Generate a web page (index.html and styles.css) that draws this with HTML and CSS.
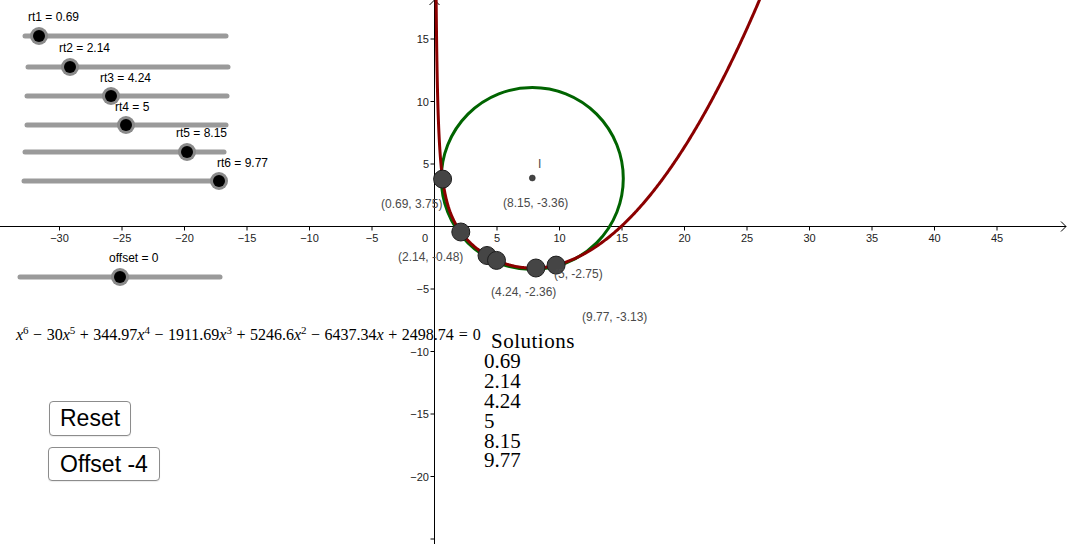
FILE: index.html
```html
<!DOCTYPE html>
<html>
<head>
<meta charset="utf-8">
<title>Solutions</title>
<link rel="stylesheet" href="styles.css">
</head>
<body>
<div class="applet">
  <svg class="graph" width="1069" height="544" viewBox="0 0 1069 544" xmlns="http://www.w3.org/2000/svg">
    <g class="axes">
      <line x1="0" y1="226.5" x2="1066" y2="226.5"/>
      <polyline class="arrow" points="1061,221.5 1066,226.5 1061,231.5"/>
      <line x1="434.5" y1="0" x2="434.5" y2="544"/>
      <polyline class="arrow" points="429.5,5 434.5,0 439.5,5"/>
    </g>
    <g id="ticks" class="ticks"></g>
    <g id="ticklabels" class="ticklabels"></g>

    <circle class="circ" cx="532.3" cy="178.5" r="91"/>
    <path id="redcurve" class="curve" d=""/>

    <circle class="center" cx="532.3" cy="178" r="3"/>
    <text class="plabel" x="538" y="164">I</text>

    <g class="pts">
      <circle cx="442.6" cy="179.1" r="9"/>
      <circle cx="460.8" cy="232" r="9"/>
      <circle cx="487" cy="255.5" r="9"/>
      <circle cx="496.5" cy="260.4" r="9"/>
      <circle cx="535.9" cy="268" r="9"/>
      <circle cx="556.1" cy="265.1" r="9"/>
    </g>
    <g class="plabels">
      <text class="plabel" x="381" y="204">(0.69, 3.75)</text>
      <text class="plabel" x="503" y="203">(8.15, -3.36)</text>
      <text class="plabel" x="398" y="257">(2.14, -0.48)</text>
      <text class="plabel" x="554" y="274">(5, -2.75)</text>
      <text class="plabel" x="491" y="292">(4.24, -2.36)</text>
      <text class="plabel" x="582" y="317">(9.77, -3.13)</text>
    </g>

    <g class="sliders">
      <line class="track" x1="25" y1="36" x2="226" y2="36"/>
      <circle class="knob-ring" cx="39" cy="36" r="9"/><circle class="knob" cx="39" cy="36" r="6"/>
      <text class="slabel" x="28" y="17">rt1 = 0.69</text>

      <line class="track" x1="28" y1="67" x2="228" y2="67"/>
      <circle class="knob-ring" cx="70" cy="67" r="9"/><circle class="knob" cx="70" cy="67" r="6"/>
      <text class="slabel" x="59" y="48">rt2 = 2.14</text>

      <line class="track" x1="27" y1="96" x2="227" y2="96"/>
      <circle class="knob-ring" cx="111" cy="96" r="9"/><circle class="knob" cx="111" cy="96" r="6"/>
      <text class="slabel" x="100" y="78">rt3 = 4.24</text>

      <line class="track" x1="27" y1="125" x2="226" y2="125"/>
      <circle class="knob-ring" cx="126" cy="125" r="9"/><circle class="knob" cx="126" cy="125" r="6"/>
      <text class="slabel" x="115" y="107">rt4 = 5</text>

      <line class="track" x1="25" y1="152" x2="224" y2="152"/>
      <circle class="knob-ring" cx="187" cy="152" r="9"/><circle class="knob" cx="187" cy="152" r="6"/>
      <text class="slabel" x="176" y="132.5">rt5 = 8.15</text>

      <line class="track" x1="24" y1="181" x2="224" y2="181"/>
      <circle class="knob-ring" cx="219" cy="181" r="9"/><circle class="knob" cx="219" cy="181" r="6"/>
      <text class="slabel" x="217" y="162.5">rt6 = 9.77</text>

      <line class="track" x1="20" y1="277" x2="220" y2="277"/>
      <circle class="knob-ring" cx="120" cy="277" r="9"/><circle class="knob" cx="120" cy="277" r="6"/>
      <text class="slabel" x="109" y="258">offset = 0</text>
    </g>
  </svg>

  <div class="equation"><i>x</i><sup>6</sup><span class="op">−</span>30<i>x</i><sup>5</sup><span class="op">+</span>344.97<i>x</i><sup>4</sup><span class="op">−</span>1911.69<i>x</i><sup>3</sup><span class="op">+</span>5246.6<i>x</i><sup>2</sup><span class="op">−</span>6437.34<i>x</i><span class="op">+</span>2498.74<span class="rel">=</span>0</div>

  <div class="solutions">
    <div class="sol-title">Solutions</div>
    <div>0.69</div>
    <div>2.14</div>
    <div>4.24</div>
    <div>5</div>
    <div>8.15</div>
    <div>9.77</div>
  </div>

  <div class="buttons">
    <button class="btn btn-reset">Reset</button>
    <button class="btn btn-offset">Offset -4</button>
  </div>
</div>
<script src="script.js"></script>
</body>
</html>
```

FILE: styles.css
```css
html, body {
  margin: 0;
  padding: 0;
  background: #ffffff;
  overflow: hidden;
}
.applet {
  position: relative;
  width: 1069px;
  height: 544px;
  background: #ffffff;
  font-family: "Liberation Sans", Arial, sans-serif;
}
.graph {
  display: block;
}
.axes line, .axes polyline, .ticks line {
  stroke: #000000;
  stroke-width: 1;
  fill: none;
}
.ticklabels text {
  font-family: "Liberation Sans", Arial, sans-serif;
  font-size: 11px;
  fill: #222222;
  dominant-baseline: central;
}
.circ {
  fill: none;
  stroke: #006400;
  stroke-width: 3;
}
.curve {
  fill: none;
  stroke: #8b0000;
  stroke-width: 3;
  stroke-linejoin: round;
}
.center {
  fill: #444444;
  stroke: #222222;
  stroke-width: 0.5;
}
.pts circle {
  fill: #454545;
  stroke: #1e1e1e;
  stroke-width: 1;
}
.plabel {
  font-family: "Liberation Sans", Arial, sans-serif;
  font-size: 12px;
  fill: #4a4a4a;
  dominant-baseline: central;
}
.track {
  stroke: #9a9a9a;
  stroke-width: 5;
  stroke-linecap: round;
}
.knob-ring {
  fill: #8a8a8a;
}
.knob {
  fill: #000000;
}
.slabel {
  font-family: "Liberation Sans", Arial, sans-serif;
  font-size: 12px;
  fill: #000000;
  dominant-baseline: central;
}
.equation {
  position: absolute;
  left: 16px;
  top: 325px;
  font-family: "Liberation Serif", "Times New Roman", serif;
  font-size: 16px;
  line-height: 20px;
  color: #000000;
  white-space: nowrap;
}
.equation i {
  font-style: italic;
}
.equation sup {
  font-size: 11px;
  vertical-align: 6px;
  line-height: 0;
}
.equation .op {
  margin: 0 4.5px;
}
.equation .rel {
  margin: 0 5px;
}
.solutions {
  position: absolute;
  left: 484px;
  top: 332px;
  font-family: "Liberation Serif", "Times New Roman", serif;
  font-size: 21px;
  line-height: 19.9px;
  color: #000000;
}
.sol-title {
  padding-left: 7px;
  letter-spacing: 0.5px;
}
.buttons {
  position: absolute;
  left: 48px;
  top: 401px;
  display: flex;
  flex-direction: column;
  align-items: flex-start;
  gap: 11px;
}
.btn {
  font-family: "Liberation Sans", Arial, sans-serif;
  font-size: 23px;
  color: #000000;
  background: #ffffff;
  border: 1px solid #8c8c8c;
  border-radius: 4px;
  padding: 0 10px;
  height: 35px;
  line-height: 33px;
  margin: 0;
  box-shadow: 0 1px 1px rgba(0,0,0,0.08);
}
.btn-reset {
  margin-left: 1px;
  width: 82px;
}
.btn-offset {
  width: 112px;
  height: 34px;
}
```

FILE: script.js
```js
(function () {
  var NS = "http://www.w3.org/2000/svg";
  var ox = 434.5, oy = 226.5, s = 12.5;
  var ticks = document.getElementById("ticks");
  var labels = document.getElementById("ticklabels");

  function mk(tag, attrs, text) {
    var el = document.createElementNS(NS, tag);
    for (var k in attrs) el.setAttribute(k, attrs[k]);
    if (text !== undefined) el.textContent = text;
    return el;
  }
  function fmt(v) {
    return v < 0 ? "\u2212" + Math.abs(v) : String(v);
  }

  for (var k = -30; k <= 45; k += 5) {
    if (k === 0) continue;
    var px = ox + k * s;
    ticks.appendChild(mk("line", { x1: px, y1: oy, x2: px, y2: oy + 4 }));
    labels.appendChild(mk("text", { x: px, y: 238, "text-anchor": "middle" }, fmt(k)));
  }
  for (var j = -25; j <= 15; j += 5) {
    if (j === 0) continue;
    var py = oy - j * s;
    ticks.appendChild(mk("line", { x1: ox - 4, y1: py, x2: ox, y2: py }));
    if (j > -25) {
      labels.appendChild(mk("text", { x: 429, y: py, "text-anchor": "end" }, fmt(j)));
    }
  }
  labels.appendChild(mk("text", { x: 425, y: 238, "text-anchor": "middle" }, "0"));

  function f(x) {
    return 0.06326 * x * x - 0.94907 * x - 0.22024 + 3.17045 / x;
  }
  var d = "";
  var x = 0.15;
  var first = true;
  while (x <= 26.6) {
    var X = 434 + x * 12.5;
    var Y = 226 - f(x) * 12.5;
    if (Y > -20) {
      d += (first ? "M" : "L") + X.toFixed(2) + "," + Y.toFixed(2) + " ";
      first = false;
    }
    var step = Math.min(0.05, 0.015 * x * x);
    x += step;
  }
  document.getElementById("redcurve").setAttribute("d", d);
})();
```
